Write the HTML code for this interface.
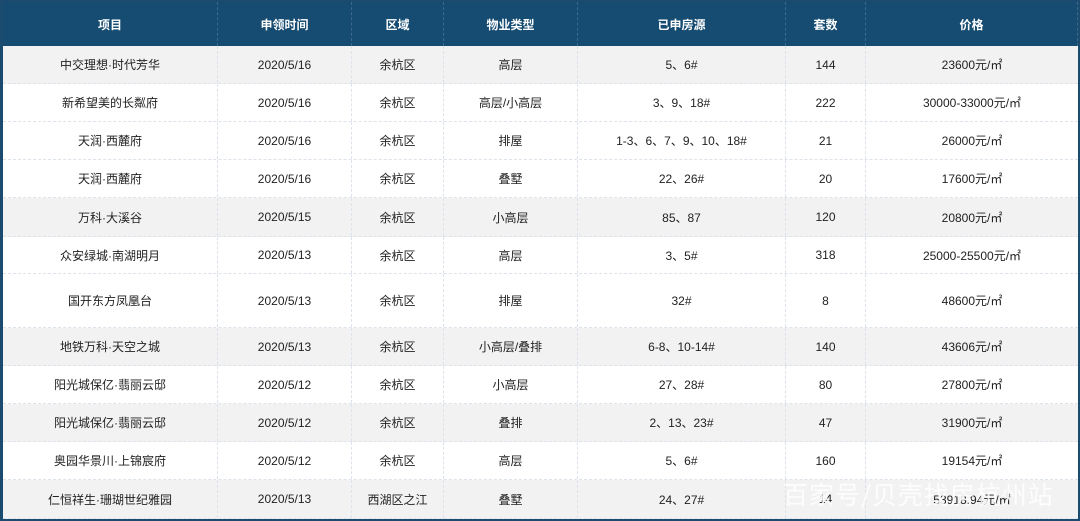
<!DOCTYPE html><html><head><meta charset="utf-8"><style>
body{margin:0;width:1080px;height:521px;overflow:hidden;background:#fff;font-family:"Liberation Sans","Noto Sans CJK SC",sans-serif;font-size:12px;color:#222}
#t{position:absolute;left:0;top:0;width:1075px;height:517px;border:2px solid #1b4b6e;border-left-width:3px;box-sizing:content-box;z-index:2;pointer-events:none}
.r{position:absolute;left:0;width:1075px;display:flex;border-bottom:1px dashed #dde3ea;box-sizing:border-box}
.c{display:flex;align-items:center;justify-content:center;border-right:1px dashed #dde3ea;box-sizing:border-box;height:100%;white-space:nowrap}
.c:last-child{border-right:none}
.h{background:#164c71;color:#fff;font-weight:bold;border-bottom:none}
.h .c{border-right:1px dashed #3d6a8c}
.g{background:#f2f2f2}
#w{position:absolute;left:783px;top:476px;font-size:25px;color:rgba(255,255,255,.85);font-family:"Noto Sans CJK SC",sans-serif;letter-spacing:1px;z-index:3}
</style></head><body><div id="t"></div>
<div id="rows"></div>
<script>
var W=[215,134,92,134,208,80,212];
var d=[["项目","申领时间","区域","物业类型","已申房源","套数","价格"],
["中交理想·时代芳华","2020/5/16","余杭区","高层","5、6#","144","23600元/㎡"],
["新希望美的长粼府","2020/5/16","余杭区","高层/小高层","3、9、18#","222","30000-33000元/㎡"],
["天润·西麓府","2020/5/16","余杭区","排屋","1-3、6、7、9、10、18#","21","26000元/㎡"],
["天润·西麓府","2020/5/16","余杭区","叠墅","22、26#","20","17600元/㎡"],
["万科·大溪谷","2020/5/15","余杭区","小高层","85、87","120","20800元/㎡"],
["众安绿城·南湖明月","2020/5/13","余杭区","高层","3、5#","318","25000-25500元/㎡"],
["国开东方凤凰台","2020/5/13","余杭区","排屋","32#","8","48600元/㎡"],
["地铁万科·天空之城","2020/5/13","余杭区","小高层/叠排","6-8、10-14#","140","43606元/㎡"],
["阳光城保亿·翡丽云邸","2020/5/12","余杭区","小高层","27、28#","80","27800元/㎡"],
["阳光城保亿·翡丽云邸","2020/5/12","余杭区","叠排","2、13、23#","47","31900元/㎡"],
["奥园华景川·上锦宸府","2020/5/12","余杭区","高层","5、6#","160","19154元/㎡"],
["仁恒祥生·珊瑚世纪雅园","2020/5/13","西湖区之江","叠墅","24、27#","14","53918.94元/㎡"]];
var Y=[2,46,84,122,160,198,237,274,328,366,404,442,480,519];
var gray=[1,5,8,10,12],h='';
for(var i=0;i<d.length;i++){var cls='r'+(i==0?' h':'')+(gray.indexOf(i)>=0?' g':'');
h+='<div class="'+cls+'" style="left:3px;top:'+Y[i]+'px;height:'+(Y[i+1]-Y[i])+'px">';
for(var j=0;j<7;j++)h+='<div class="c" style="width:'+W[j]+'px">'+d[i][j]+'</div>';h+='</div>';}
document.getElementById('rows').innerHTML=h;
</script>
<div id="w">百家号/贝壳找房杭州站</div>
</body></html>
